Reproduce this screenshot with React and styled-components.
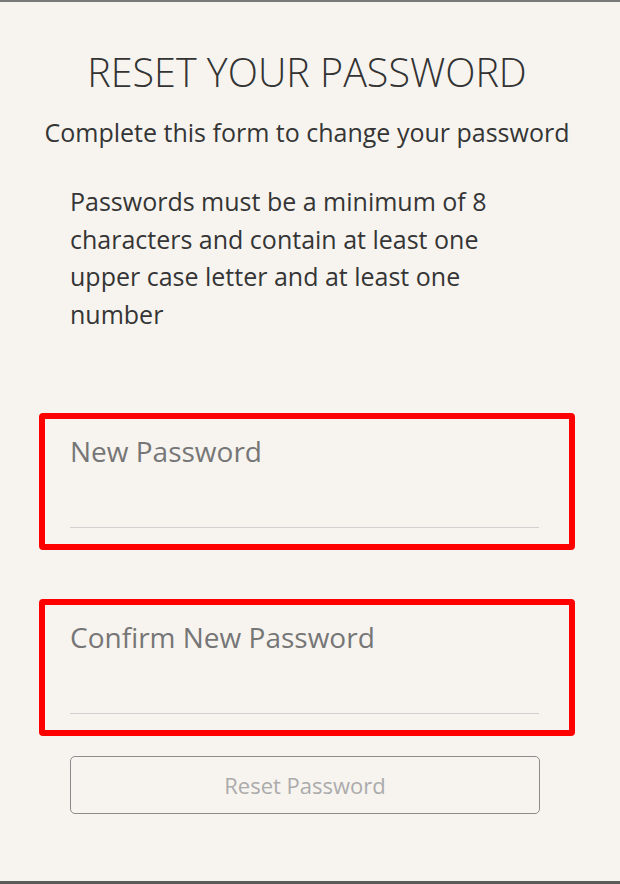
import styled, { createGlobalStyle } from "styled-components"

const GlobalStyle = createGlobalStyle`
  * { box-sizing: border-box; }
  html, body {
    margin: 0;
    padding: 0;
    background: #f7f4f0;
    font-family: "Open Sans", "Noto Sans", sans-serif;
  }
`

const Page = styled.div`
  min-height: 884px;
  background: #f7f4f0;
  border-top: 2px solid #7a7a7a;
  border-bottom: 3px solid #5a5a5a;
  padding: 0 45px 0 39px;
  display: flex;
  flex-direction: column;
`

const Title = styled.h1`
  margin: 47px 0 0;
  font-size: 39.5px;
  line-height: 46px;
  font-weight: 300;
  color: #333333;
  text-align: center;
`

const Subtitle = styled.p`
  margin: 20px 0 0;
  font-size: 25px;
  line-height: 34px;
  color: #353535;
  text-align: center;
`

const Rules = styled.p`
  margin: 34px 0 0 31px;
  width: 470px;
  font-size: 25px;
  line-height: 37.7px;
  color: #353535;
`

const Form = styled.form`
  margin-top: 79px;
  display: flex;
  flex-direction: column;
  gap: 49px;
`

const Field = styled.label`
  display: flex;
  flex-direction: column;
  border: 6px solid ${p => (p.$highlight ? "#ff0000" : "transparent")};
  border-radius: 4px;
  padding: 14px 30px 16px 25px;
`

const Label = styled.span`
  font-size: 28px;
  line-height: 36px;
  color: #767676;
`

const Input = styled.input`
  height: 59px;
  border: none;
  border-bottom: 1px solid #d0d0d0;
  background: transparent;
  font: inherit;
  outline: none;
`

const Button = styled.button`
  margin: 20px 0 0 31px;
  width: 470px;
  height: 58px;
  border: 1.5px solid #8c8c8c;
  border-radius: 5px;
  background: transparent;
  font-family: "Open Sans", "Noto Sans", sans-serif;
  font-size: 22px;
  color: #ababab;
`

const App = () => {
  return (
    <Page>
      <GlobalStyle />
      <Title>RESET YOUR PASSWORD</Title>
      <Subtitle>Complete this form to change your password</Subtitle>
      <Rules>
        Passwords must be a minimum of 8 characters and contain at least one
        upper case letter and at least one number
      </Rules>
      <Form>
        <Field $highlight>
          <Label>New Password</Label>
          <Input type="password" />
        </Field>
        <Field $highlight>
          <Label>Confirm New Password</Label>
          <Input type="password" />
        </Field>
      </Form>
      <Button type="button">Reset Password</Button>
    </Page>
  )
}

export default App
